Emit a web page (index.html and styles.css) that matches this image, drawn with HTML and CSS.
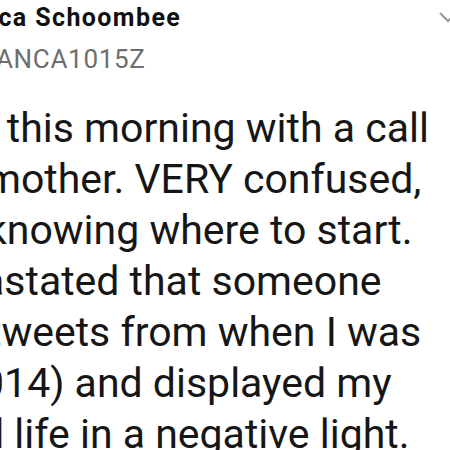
FILE: index.html
```
<!DOCTYPE html>
<html>
<head>
<meta charset="utf-8">
<link rel="stylesheet" href="styles.css">
</head>
<body>
<div class="tweet">
  <div class="header">
    <div class="who">
      <div class="name">nca Schoombee</div>
      <div class="handle">BIANCA1015Z</div>
    </div>
    <svg class="chev" width="14" height="14" viewBox="0 0 14 14"><polyline points="1,1 9,9 17,1" fill="none" stroke="#9a9a9a" stroke-width="2.2"/></svg>
  </div>
  <div class="text">
    <div class="line l1">in this morning with a call</div>
    <div class="line l2">mother. VERY confused,</div>
    <div class="line l3">knowing where to start.</div>
    <div class="line l4">astated that someone</div>
    <div class="line l5">tweets from when I was</div>
    <div class="line l6">2014) and displayed my</div>
    <div class="line l7">d life in a negative light.</div>
  </div>
</div>
</body>
</html>
```
FILE: styles.css
```
html, body {
  margin: 0;
  padding: 0;
  background: #ffffff;
  overflow: hidden;
  width: 450px;
  height: 450px;
}
.tweet {
  font-family: Roboto, "Liberation Sans", sans-serif;
  color: #161616;
}
.header {
  display: flex;
  justify-content: space-between;
  align-items: flex-start;
  width: 453px;
}
.who {
  overflow: hidden;
}
.name {
  font-weight: bold;
  font-size: 25px;
  letter-spacing: 1.4px;
  line-height: 30px;
  margin-top: 3px;
  text-indent: -17px;
  white-space: nowrap;
  color: #111;
}
.handle {
  font-size: 26px;
  letter-spacing: 0.7px;
  line-height: 30px;
  margin-top: 11px;
  text-indent: -29px;
  white-space: nowrap;
  color: #6e6e6e;
}
.chev {
  margin-top: 12px;
  flex: none;
}
.text {
  margin-top: 29px;
  font-size: 41px;
  line-height: 51px;
  overflow: hidden;
  width: 450px;
}
.line {
  white-space: nowrap;
}
.l1 { text-indent: -36px; }
.l2 { text-indent: -15px; }
.l3 { text-indent: -14px; }
.l4 { text-indent: -18px; }
.l5 { text-indent: -12px; }
.l6 { text-indent: -42px; }
.l7 { text-indent: -19px; }
```
